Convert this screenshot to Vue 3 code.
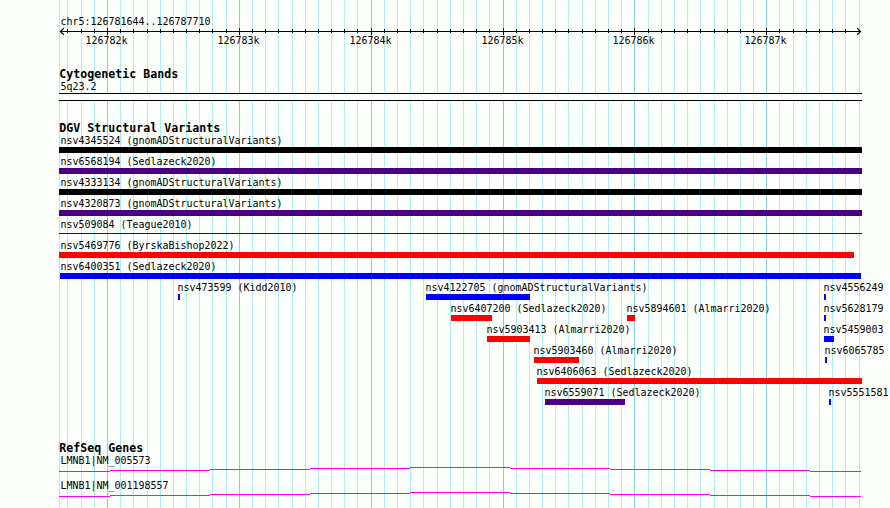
<script setup>
const majors = [107, 239, 371, 503, 634, 766]
const minors = [
  67, 81, 94, 120, 133, 147, 160, 173, 186, 199, 212, 226, 252, 265, 278, 292, 305, 318,
  331, 344, 357, 384, 397, 410, 423, 437, 450, 463, 476, 489, 516, 529, 542, 555, 568,
  582, 595, 608, 621, 648, 661, 674, 687, 700, 714, 727, 740, 753, 779, 793, 806, 819, 832, 845
]
const gridMinors = [59, ...minors, 859]

const BLACK = '#000000'
const INDIGO = '#4b0082'
const RED = '#ff0000'
const BLUE = '#0000ff'

// [row, label, label x, bar start, bar end, colour, thin]
const variants = [
  [0, 'nsv4345524 (gnomADStructuralVariants)', 60, 59, 862, BLACK],
  [1, 'nsv6568194 (Sedlazeck2020)', 60, 59, 862, INDIGO],
  [2, 'nsv4333134 (gnomADStructuralVariants)', 60, 59, 862, BLACK],
  [3, 'nsv4320873 (gnomADStructuralVariants)', 60, 59, 862, INDIGO],
  [4, 'nsv509084 (Teague2010)', 60, 59, 862, BLUE, true],
  [5, 'nsv5469776 (ByrskaBishop2022)', 60, 59, 854, RED],
  [6, 'nsv6400351 (Sedlazeck2020)', 60, 60, 861, BLUE],
  [7, 'nsv473599 (Kidd2010)', 177, 178, 180, BLUE],
  [7, 'nsv4122705 (gnomADStructuralVariants)', 425, 426, 530, BLUE],
  [7, 'nsv4556249', 823, 824, 826, BLUE],
  [8, 'nsv6407200 (Sedlazeck2020)', 450, 451, 492, RED],
  [8, 'nsv5894601 (Almarri2020)', 626, 627, 635, RED],
  [8, 'nsv5628179', 823, 824, 826, BLUE],
  [9, 'nsv5903413 (Almarri2020)', 486, 487, 530, RED],
  [9, 'nsv5459003', 823, 824, 834, BLUE],
  [10, 'nsv5903460 (Almarri2020)', 533, 534, 579, RED],
  [10, 'nsv6065785', 824, 825, 827, BLUE],
  [11, 'nsv6406063 (Sedlazeck2020)', 536, 537, 862, RED],
  [12, 'nsv6559071 (Sedlazeck2020)', 544, 545, 625, INDIGO],
  [12, 'nsv5551581', 828, 829, 831, BLUE]
].map(([row, label, tx, x1, x2, color, thin]) => ({
  label, tx: tx + 0.5, x: x1, w: x2 - x1, color,
  base: 144 + row * 21,
  y: thin ? 149 + row * 21 : 147 + row * 21,
  h: thin ? 1 : 6
}))

const headings = [
  { text: 'Cytogenetic Bands', y: 78 },
  { text: 'DGV Structural Variants', y: 132 },
  { text: 'RefSeq Genes', y: 452 }
]

const genes = [
  { label: 'LMNB1|NM_005573', base: 464, y: 471 },
  { label: 'LMNB1|NM_001198557', base: 489, y: 496 }
]
// intron arc, drawn as one-pixel steps
const steps = [
  [59, 110, 0], [110, 210, 1], [210, 310, 2], [310, 410, 3], [410, 510, 4],
  [510, 610, 3], [610, 710, 2], [710, 810, 1], [810, 861, 0]
]
</script>

<template>
  <svg class="browser" width="890" height="508" viewBox="0 0 890 508">
    <g class="grid">
      <rect v-for="x in gridMinors" :key="'n' + x" class="minor" :x="x" y="0" width="1" height="508" />
      <rect v-for="x in majors" :key="'m' + x" class="major" :x="x" y="0" width="1" height="508" />
    </g>

    <text class="label" x="60.5" y="25" :textLength="25 * 6" lengthAdjust="spacingAndGlyphs">chr5:126781644..126787710</text>
    <g class="axis">
      <rect x="60" y="31" width="801" height="1" />
      <rect v-for="x in minors" :key="'t' + x" :x="x" y="29" width="1" height="4" />
      <rect v-for="x in majors" :key="'T' + x" :x="x" y="28" width="1" height="7" />
      <path d="M63.8 28.2 L60.5 31.5 L63.8 34.8 M857.2 28.2 L860.5 31.5 L857.2 34.8" />
      <text
        v-for="(x, i) in majors" :key="'l' + x" class="label"
        :x="x - 21.5" y="44" textLength="42" lengthAdjust="spacingAndGlyphs"
      >{{ 126782 + i }}k</text>
    </g>

    <text
      v-for="h in headings" :key="h.text" class="heading"
      x="59.3" :y="h.y" :textLength="h.text.length * 7" lengthAdjust="spacingAndGlyphs"
    >{{ h.text }}</text>

    <text class="label" x="60.5" y="90" textLength="36" lengthAdjust="spacingAndGlyphs">5q23.2</text>
    <g>
      <rect class="ink" x="59" y="93" width="803" height="8" />
      <rect class="paper" x="59" y="94" width="803" height="6" />
    </g>

    <g v-for="v in variants" :key="v.label">
      <rect class="bar" :x="v.x" :y="v.y" :width="v.w" :height="v.h" :fill="v.color" />
      <text class="label" :x="v.tx" :y="v.base" :textLength="v.label.length * 6" lengthAdjust="spacingAndGlyphs">{{ v.label }}</text>
    </g>

    <g v-for="g in genes" :key="g.label">
      <text class="label" x="60.5" :y="g.base" :textLength="g.label.length * 6" lengthAdjust="spacingAndGlyphs">{{ g.label }}</text>
      <rect v-for="s in steps" :key="s[0]" class="gene" :x="s[0]" :y="g.y - s[2]" :width="s[1] - s[0]" height="1" />
    </g>
  </svg>
</template>

<style scoped>
.browser {
  display: block;
  background: #fdfffc;
}
rect {
  shape-rendering: crispEdges;
}
.minor {
  fill: #afeeee;
}
.major {
  fill: #87ceeb;
}
.label {
  font: 11px "DejaVu Sans Mono", monospace;
  fill: #000;
}
.heading {
  font: bold 11.5px "DejaVu Sans Mono", monospace;
  fill: #000;
}
.axis path {
  fill: none;
  stroke: #000;
  stroke-width: 1.2;
}
.ink {
  fill: #000;
}
.paper {
  fill: #fdfffc;
}
.gene {
  fill: #ff00ff;
}
</style>

<style>
body {
  margin: 0;
  background: #fdfffc;
  overflow: hidden;
}
</style>
